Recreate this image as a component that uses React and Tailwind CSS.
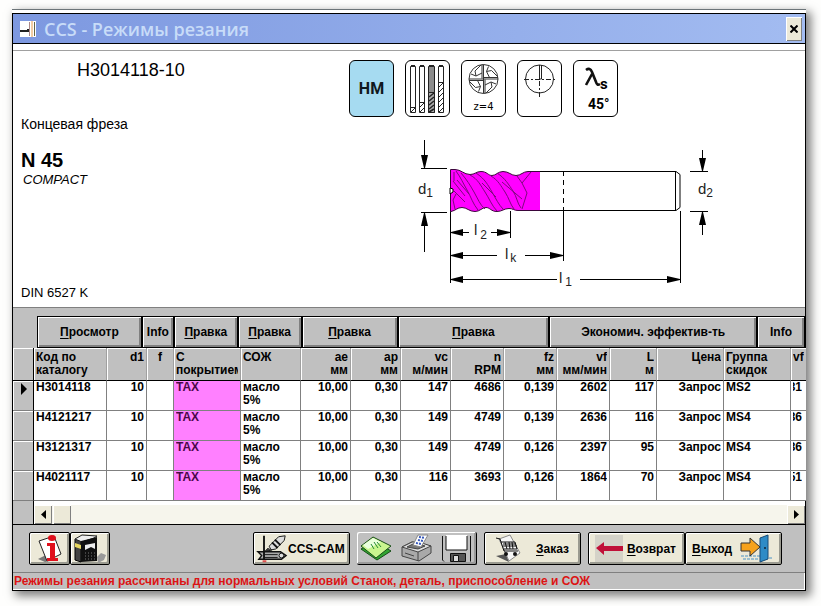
import React from "react";

const columns = [
  { label: ["Код по", "каталогу"], align: "text-left", width: "w-[73px]" },
  { label: ["d1"], align: "text-right", width: "w-[40px]" },
  { label: ["f"], align: "text-center", width: "w-[27px]" },
  { label: ["С", "покрытием"], align: "text-left", width: "w-[67px]" },
  { label: ["СОЖ"], align: "text-left", width: "w-[60px]" },
  { label: ["ae", "мм"], align: "text-right", width: "w-[50px]" },
  { label: ["ap", "мм"], align: "text-right", width: "w-[50px]" },
  { label: ["vc", "м/мин"], align: "text-right", width: "w-[50px]" },
  { label: ["n", "RPM"], align: "text-right", width: "w-[53px]" },
  { label: ["fz", "мм"], align: "text-right", width: "w-[53px]" },
  { label: ["vf", "мм/мин"], align: "text-right", width: "w-[53px]" },
  { label: ["L", "м"], align: "text-right", width: "w-[47px]" },
  { label: ["Цена"], align: "text-right", width: "w-[67px]" },
  { label: ["Группа", "скидок"], align: "text-left", width: "w-[67px]" },
  { label: ["vf"], align: "text-left", width: "w-[15px]" },
];

const rows = [
  ["H3014118", "10", "", "TAX", "масло 5%", "10,00", "0,30", "147", "4686", "0,139", "2602", "117", "Запрос", "MS2", "31"],
  ["H4121217", "10", "", "TAX", "масло 5%", "10,00", "0,30", "149", "4749", "0,139", "2636", "116", "Запрос", "MS4", "36"],
  ["H3121317", "10", "", "TAX", "масло 5%", "10,00", "0,30", "149", "4749", "0,126", "2397", "95", "Запрос", "MS4", "36"],
  ["H4021117", "10", "", "TAX", "масло 5%", "10,00", "0,30", "116", "3693", "0,126", "1864", "70", "Запрос", "MS4", "51"],
];

const beveled = "border border-black shadow-[inset_1px_1px_0_#fff,inset_-2px_-2px_0_#808080]";

function Hot({ text }) {
  return (
    <span>
      <span className="underline underline-offset-2">{text[0]}</span>
      {text.slice(1)}
    </span>
  );
}

function HeaderButton({ children }) {
  return (
    <button className={"flex h-8 min-w-0 items-center justify-center overflow-hidden whitespace-nowrap bg-[#c0c0c0] " + beveled}>
      {children}
    </button>
  );
}

function ToolButton({ className, label, children }) {
  return (
    <button
      aria-label={label}
      className={"flex h-[33px] items-center overflow-hidden rounded-[2px] border border-black bg-[#ece9d8] shadow-[inset_1px_1px_0_#fff,inset_-2px_-2px_0_#9a9a90] " + className}
    >
      {children}
    </button>
  );
}

function FlatButton({ label, children }) {
  return (
    <button aria-label={label} className="flex h-full flex-1 items-center justify-center">
      {children}
    </button>
  );
}

function Card({ className = "bg-white", children }) {
  return (
    <div className={"h-[57px] w-[45px] shrink-0 overflow-hidden rounded-md border border-black " + className}>
      {children}
    </div>
  );
}

const vane = "M21.500 18V3.500M20 3.500v14M20 12l-6 3-1-5 6-6M14 15l-5-2";

function FeatureCards() {
  return (
    <div className="flex gap-[11px]">
      <Card className="flex items-center justify-center bg-[#a6dbf1]">
        <span className="font-['Roboto',sans-serif] text-[16px] font-bold leading-5 text-[#101820]">HM</span>
      </Card>
      <Card>
        <svg width="43" height="55" viewBox="0 0 43 55" fill="#fff" stroke="#222">
          <path d="M4.500 5.500v46h5v-46zM13.500 5.500v46h5v-46zM32.500 5.500v46h5v-46z" />
          <path d="M22.500 5.500v46h6v-46z" fill="#8c8c8c" />
          <path d="M22.500 31.500h6v20h-6z" fill="#a8a8a8" />
          <path d="M4.500 46.500h5M13.500 41.500h5M32.500 21.500h5" />
          <path d="M5 51l4-4M14 46l4-4M14 51l4-4M33 26l4-4M33 31l4-4M33 36l4-4M33 41l4-4M33 46l4-4M33 51l4-4" />
          <path d="M23 36l5-4M23 40l5-4M23 44l5-4M23 48l5-4M23 51l5-3" strokeWidth="1.500" />
          <path d="M5 5h4M14 5h4M23 5h5M33 5h4" strokeWidth="2" />
        </svg>
      </Card>
      <Card>
        <svg width="43" height="55" viewBox="0 0 43 55" fill="none" stroke="#333">
          <circle cx="21.500" cy="18" r="14.500" />
          <path d={vane} />
          <path transform="rotate(90 21.500 18)" d={vane} />
          <path transform="rotate(180 21.500 18)" d={vane} />
          <path transform="rotate(270 21.500 18)" d={vane} />
          <text x="21.500" y="49" textAnchor="middle" fontSize="10" fontWeight="400" fontFamily="DejaVu Sans" fill="#000" stroke="none">z=4</text>
        </svg>
      </Card>
      <Card>
        <svg width="43" height="55" viewBox="0 0 43 55" fill="none" stroke="#222">
          <circle cx="21.500" cy="18" r="14" />
          <path d="M21.500 4v15M23.500 4v14h-2" />
          <path d="M6 18.500h31M21.500 20v17" strokeDasharray="5 2 2 2" />
        </svg>
      </Card>
      <Card>
        <svg width="43" height="55" viewBox="0 0 43 55">
          <path d="M12 9q4-3 6 2l4 10q1 4 4 2M18 13l-6 11" fill="none" stroke="#111" strokeWidth="2.600" />
          <text x="26" y="28" fontSize="15" fontWeight="bold" fontFamily="Roboto, sans-serif">s</text>
          <text x="14" y="48" fontSize="14" fontWeight="bold" fontFamily="Roboto, sans-serif">45°</text>
        </svg>
      </Card>
    </div>
  );
}

function ToolDrawing() {
  return (
    <svg className="ml-[51px] mt-[13px] block shrink-0" width="330" height="165" viewBox="0 0 330 165" fill="none" stroke="#000">
      <path d="M140 41.500h136l4 3v33l-4 3H140M275.500 41.500v39" fill="#fff" />
      <path
        d="M51 39.500h4c6 0 9 5 15 5 5 0 6-3 11-3 6 0 7 4 11 4s6-4 11-4c6 0 8 4 13 4s7-4 12-4h12V80.500h-22c-4 0-5-2-9-2-5 0-7 3-12 3-6 0-7-4-11-4s-6 4-11 4c-6 0-8-4-13-4s-6 3-11 4z"
        fill="#ff00ff"
        stroke="none"
      />
      <path
        d="M50.500 82V39.500H55c6 0 9 5 15 5 5 0 6-3 11-3 6 0 7 4 11 4s6-4 11-4c6 0 8 4 13 4s7-4 12-4h12M140 80.500h-22c-4 0-5-2-9-2-5 0-7 3-12 3-6 0-7-4-11-4s-6 4-11 4c-6 0-8-4-13-4s-6 3-11 4"
        stroke="#3a063a"
      />
      <path d="M50 58l3 1v3l-3 2z" fill="#fff" />
      <g stroke="#7d0a7d">
        <path d="M56 41c5 7 7 12 11 19s6 14 11 20M61 43c6 7 9 12 13 19s6 13 11 17" />
        <path d="M70 45c8 4 11 11 15 17s7 14 12 19M76 43c9 6 12 12 16 19s7 13 11 17" />
        <path d="M91 46c7 4 10 10 14 16s5 12 9 17M97 43c8 5 12 12 16 18s4 12 8 17" />
        <path d="M53 51l12 15M53 60l12 12M57 50l12 14M82 53l14 14M102 52l20 17" />
        <path d="M117 46l5 7 9-11M122 53l5 10-5 16M54 42v9M55 79l-2-9 3-6" />
      </g>
      <path d="M163.500 41v39" strokeDasharray="5 4" />
      <path d="M50.500 82v71M110.500 81v27M163.500 81v50M280.500 81v72" />
      <path d="M21 38.500h26M21 82.500h26M290 41.500h18M290 81.500h18" />
      <path d="M24.500 10v18M24.500 92v30M302.500 20v12M302.500 91v14" />
      <path d="M62 102.500h7M91 102.500h7M62 125.500h35M125 125.500h26M62 149.500h95M180 149.500h88" />
      <g fill="#000" stroke="none">
        <path d="M21 25h7l-3 13h-1zM21 96h7l-3-13h-1zM299 28h7l-3 13h-1zM299 95h7l-3-13h-1z" />
        <path d="M51 102l12-3v7l-12-3zM110 102l-13-3v7l13-3zM51 125l12-3v7l-12-3zM163 125l-13-3v7l13-3zM51 149l12-3v7l-12-3zM280 149l-13-3v7l13-3z" />
      </g>
      <g fill="#222" stroke="none" fontFamily="Liberation Sans" fontWeight="400" fontSize="15">
        <text x="18" y="64">d<tspan fontSize="12" dy="3">1</tspan></text>
        <text x="298" y="64">d<tspan fontSize="12" dy="3">2</tspan></text>
        <text x="74" y="105">l<tspan fontSize="12" dx="3" dy="4">2</tspan></text>
        <text x="105" y="129">l<tspan fontSize="12" dx="2" dy="3">k</tspan></text>
        <text x="159" y="153">l<tspan fontSize="12" dx="3" dy="3">1</tspan></text>
      </g>
    </svg>
  );
}

function InfoIcon() {
  return (
    <svg width="30" height="30" viewBox="0 0 30 30">
      <path d="M3 25l8-4 4 6-5 1z" fill="#777" />
      <path d="M4 7l15-5 7 18-14 7z" fill="#fff" stroke="#222" />
      <ellipse cx="17" cy="4" rx="4" ry="3" fill="#e0101c" />
      <path d="M12 9h8v15h3v3H12v-3h3V12h-3z" fill="#e0101c" />
    </svg>
  );
}

function BookIcon() {
  return (
    <svg width="34" height="30" viewBox="0 0 34 30">
      <path d="M24 23l4-4 5 2-2 5-6 3z" fill="#999" />
      <path d="M2 5l6 2v21l-6-2z" fill="#444" stroke="#000" />
      <path d="M2 5l7-4 15 1-3 2-12 4z" fill="#eee" stroke="#222" />
      <path d="M8 7l16-4v24l-16 1z" fill="#111" />
      <path d="M2 9l6 2v4l-6-2z" fill="#e8d860" />
      <path d="M12 11l10-2v6l-4-2-6 3z" fill="#eee" />
      <path d="M12 19h10M12 22h10M12 25h10" stroke="#777" strokeDasharray="1 2" />
    </svg>
  );
}

function MillIcon() {
  return (
    <svg className="shrink-0" width="32" height="31" viewBox="0 0 34 31" stroke="#111">
      <path d="M14 13L24 3l7-1-1 5-9 9-5 1z" fill="#ddd" />
      <path d="M17 9l6 6M20 6l6 6" strokeWidth="2" />
      <path d="M13 15l-4 4 8-2" fill="#444" />
      <path d="M2 19h24l6 4-5 4H3l3-4z" fill="#aaa" strokeWidth="1.500" />
      <path d="M9 22h14M9 25h14" />
      <circle cx="27" cy="23" r="2.500" fill="#ddd" />
      <path d="M8.500 2v25" strokeWidth="2" />
      <path d="M7 29h4" stroke="#e05050" strokeWidth="2" />
    </svg>
  );
}

function NotesIcon() {
  return (
    <svg width="33" height="28" viewBox="0 0 33 28" stroke="#174d17">
      <path d="M1 15l14-8 16 10-14 9z" fill="#31a431" />
      <path d="M1 12l12-9 18 9-15 12z" fill="#c9f58f" />
      <path d="M3 11l10-7 8 4-13 7z" fill="#eaffdd" stroke="none" />
      <path d="M11 10l3 5M14 8l4 6M17 8l4 5" stroke="#268b34" />
    </svg>
  );
}

function PrinterIcon() {
  return (
    <svg width="33" height="30" viewBox="0 0 33 30" stroke="#444">
      <path d="M2 14l10-5 19 4v7l-12 8-17-5z" fill="#a9a9a9" />
      <path d="M2 14l16 5 13-6-12-4-7 0z" fill="#dcdcdc" />
      <path d="M7 14l8-4 10 3-7 3z" fill="#777" />
      <path d="M13 12l5-10h10l-7 12z" fill="#fff" stroke="#888" />
      <path d="M19 4l6 1M18 7l5 1M16 10l5 1" stroke="#3658bb" strokeWidth="2" strokeDasharray="2 1" />
      <path d="M18 19v9M5 20l9 3" />
    </svg>
  );
}

function DiskIcon() {
  return (
    <svg width="31" height="29" viewBox="0 0 31 29" stroke="#111">
      <path d="M1.500 1.500h28v26H3l-1.500-2z" fill="#c0c0c0" stroke="none" />
      <path d="M1.500 2v24l1.500 1.500M29.500 2v25.500" fill="none" />
      <path d="M5 1h21v15H5z" fill="#fff" stroke="none" />
      <path d="M5 2v14h21V2" fill="none" />
      <path d="M9.500 19.500h15v8h-15z" fill="#555" />
      <path d="M12.500 21.500h5v6h-5z" fill="#ddd" />
    </svg>
  );
}

function CartIcon() {
  return (
    <svg width="27" height="29" viewBox="0 0 27 29">
      <path d="M1 22l10-2 3 8z" fill="#555" />
      <path d="M4 5L15 1l10 18-11 8z" fill="#f6f6f6" stroke="#888" />
      <path d="M1 4l4 1 4 12h14M6 8h14l2 7H9M8 10h13M8 12h14M10 8l2 7M14 8l1 7M17 8l1 7" fill="none" stroke="#111" />
      <circle cx="11" cy="20" r="2" fill="#111" />
      <circle cx="20" cy="20" r="2" fill="#111" />
    </svg>
  );
}

function ExitIcon() {
  return (
    <svg width="33" height="29" viewBox="0 0 33 29">
      <path d="M1 22h19M3 25h15M25 24h7" stroke="#4b93c4" strokeDasharray="3 1" />
      <path d="M20 4l8-3v24l-8 3z" fill="#2e8bc6" stroke="#174a77" />
      <path d="M1 9h9V4l10 9-10 9v-5H1z" fill="#f6a21c" stroke="#333" />
      <circle cx="25" cy="14" r="1" fill="#123" />
    </svg>
  );
}

function TitleBar() {
  return (
    <header className="flex h-[31px] items-center border-y border-black bg-linear-to-r from-[#7d98e0] to-[#a3bcf1] pl-[7px] pr-[3px]">
      <svg width="16" height="16" viewBox="0 0 16 16">
        <path d="M0 0h16v16H0z" fill="#fff" />
        <path d="M0 10h8V8" fill="none" stroke="#222" strokeWidth="2" />
        <path d="M9.500 1v14" stroke="#a88" />
        <path d="M12 0v16" stroke="#e49a4a" />
        <path d="M14.500 1v14" stroke="#664" />
      </svg>
      <h1 className="ml-2 flex-1 font-['Open_Sans',sans-serif] text-[18px] font-semibold leading-6 text-[#c8dcf8]">
        CCS - Режимы резания
      </h1>
      <button aria-label="Закрыть" className="flex h-6 w-4 items-center justify-center bg-[#ece9d8] shadow-[inset_1px_1px_0_#fff,inset_-1px_-1px_0_#808080]">
        <svg width="8" height="8" viewBox="0 0 8 8" stroke="#000" strokeWidth="2">
          <path d="M0.500 0.500l7 7M7.500 0.500l-7 7" />
        </svg>
      </button>
    </header>
  );
}

function DataTable() {
  return (
    <table className="w-full table-fixed border-separate border-spacing-0">
      <colgroup>
        <col className="w-[21px]" />
        {columns.map((c, i) => (
          <col key={i} className={c.width} />
        ))}
      </colgroup>
      <thead>
        <tr className="h-[33px] bg-[#c0c0c0] align-top">
          <th className="border-b border-r border-black p-0 shadow-[inset_1px_1px_0_#fff]" aria-label="Запись" />
          {columns.map((c, i) => (
            <th
              key={i}
              className={"border-b border-r border-b-black border-r-[#a0a0a0] px-[2px] pb-0 pt-[3px] font-bold leading-[13px] shadow-[inset_1px_1px_0_#fff] last:border-r-0 " + c.align}
            >
              <div className="overflow-hidden whitespace-nowrap">
                {c.label.map((line) => (
                  <div key={line}>{line}</div>
                ))}
              </div>
            </th>
          ))}
        </tr>
      </thead>
      <tbody>
        {rows.map((row, r) => (
          <tr key={row[0]} className="h-[30px] align-top">
            <td className="border-b border-r border-b-[#808080] border-r-black bg-[#c0c0c0] p-0 shadow-[inset_1px_1px_0_#fff]">
              {r === 0 && (
                <svg className="ml-2 mt-[2px]" width="6" height="12" viewBox="0 0 6 12">
                  <path d="M0 0l6 6-6 6z" />
                </svg>
              )}
            </td>
            {row.map((value, i) => (
              <td
                key={i}
                className={
                  "border-b border-r border-[#808080] px-[2px] py-0 leading-[13px] last:border-r-0 " +
                  (i === 14 ? "bg-white" : columns[i].align) +
                  (i === 3 ? " bg-[#ff80ff] text-[#4a0848]" : "")
                }
              >
                <div className={i === 14 ? "mr-[2px] flex justify-end overflow-hidden" : "overflow-hidden"}>{value}</div>
              </td>
            ))}
          </tr>
        ))}
      </tbody>
    </table>
  );
}

const scrollButton = "flex h-[19px] w-[18px] items-center justify-center bg-[#ece9d8] shadow-[inset_1px_1px_0_#fff,inset_-1px_-1px_0_#808080]";

function ScrollBar() {
  return (
    <div className="flex h-6 border-b border-black">
      <div className="w-[21px] border-r border-black bg-[#c0c0c0]" />
      <div className="flex flex-1 items-end bg-white">
        <div className="flex h-[19px] flex-1 bg-[#f6f5ec]">
          <button aria-label="Влево" className={scrollButton}>
            <svg width="5" height="9" viewBox="0 0 5 9"><path d="M5 0v9L0 4.500z" /></svg>
          </button>
          <div className={"ml-px " + scrollButton} />
          <button aria-label="Вправо" className={"ml-auto " + scrollButton}>
            <svg width="5" height="9" viewBox="0 0 5 9"><path d="M0 0v9l5-4.500z" /></svg>
          </button>
        </div>
      </div>
    </div>
  );
}

export default function App() {
  return (
    <div className="min-h-screen bg-[#fefefd] pb-4 pl-3 pr-[15px] pt-[9px] font-['Liberation_Sans',Arial,sans-serif] text-[12px] font-bold text-black">
      <div className="border-t border-[#6c7478] bg-white pt-[3px] shadow-[4px_4px_9px_1px_rgba(0,0,0,0.5)]">
        <div className="border-x border-b border-black">
          <TitleBar />
          <main className="mt-[6px]">
            <section className="flex h-[257px] border-t border-[#a0a0a0] bg-white pt-[9px]">
              <div className="flex w-[336px] shrink-0 flex-col pl-2 font-normal">
                <h2 className="ml-14 text-[18px] leading-5">H3014118-10</h2>
                <p className="mt-[34px] text-[14px] leading-5">Концевая фреза</p>
                <p className="mt-[14px] text-[20px] font-bold leading-6">N 45</p>
                <p className="ml-[2px] text-[13px] italic leading-4">COMPACT</p>
                <p className="mt-auto pb-[6px] text-[13px] leading-4">DIN 6527 K</p>
              </div>
              <div>
                <FeatureCards />
                <ToolDrawing />
              </div>
            </section>
            <div className="border-t border-[#808080] bg-[#c0c0c0] pl-6 pt-2">
              <div className="grid grid-cols-[105fr_32fr_64fr_64fr_96fr_152fr_208fr_48fr]">
                <HeaderButton><Hot text="Просмотр" /></HeaderButton>
                <HeaderButton>Info</HeaderButton>
                <HeaderButton><Hot text="Правка" /></HeaderButton>
                <HeaderButton><Hot text="Правка" /></HeaderButton>
                <HeaderButton><Hot text="Правка" /></HeaderButton>
                <HeaderButton><Hot text="Правка" /></HeaderButton>
                <HeaderButton>Экономич. эффектив-ть</HeaderButton>
                <HeaderButton>Info</HeaderButton>
              </div>
            </div>
            <DataTable />
            <ScrollBar />
          </main>
          <div className="flex gap-[7px] bg-[#c0c0c0] pb-[7px] pl-4 pr-[23px] pt-[7px]">
            <div className="mr-auto flex">
              <ToolButton label="Информация" className="w-[41px] justify-center"><InfoIcon /></ToolButton>
              <ToolButton label="Каталог" className="w-[40px] justify-center"><BookIcon /></ToolButton>
            </div>
            <ToolButton className="w-[97px] pl-[2px]">
              <MillIcon />
              <span className="whitespace-nowrap">CCS-CAM</span>
            </ToolButton>
            <div className="flex h-[33px] w-[120px] rounded-[2px] border-b border-r border-black shadow-[inset_1px_1px_0_#fff,inset_-2px_-2px_0_#9a9a9a]">
              <FlatButton label="Заметки"><NotesIcon /></FlatButton>
              <FlatButton label="Печать"><PrinterIcon /></FlatButton>
              <FlatButton label="Сохранить"><DiskIcon /></FlatButton>
            </div>
            <ToolButton className="w-[97px] justify-between pl-[10px] pr-[11px]">
              <CartIcon />
              <Hot text="Заказ" />
            </ToolButton>
            <div className="flex">
              <ToolButton className="w-[97px] justify-between pl-[6px] pr-2">
                <svg className="bg-[#d4d2c8]" width="28" height="27" viewBox="0 0 28 27">
                  <path d="M1 13l8-6v4h19v5H9v4z" fill="#c01038" />
                </svg>
                <Hot text="Возврат" />
              </ToolButton>
              <ToolButton className="w-[97px] justify-between pl-[6px] pr-2">
                <Hot text="Выход" />
                <ExitIcon />
              </ToolButton>
            </div>
          </div>
          <footer className="h-[18px] overflow-hidden whitespace-nowrap border-t border-[#808080] bg-[#c0c0c0] pl-px leading-4 text-[#dc1414] shadow-[inset_-1px_-1px_0_#fff]">
            Режимы резания рассчитаны для нормальных условий Станок, деталь, приспособление и СОЖ
          </footer>
        </div>
      </div>
    </div>
  );
}
